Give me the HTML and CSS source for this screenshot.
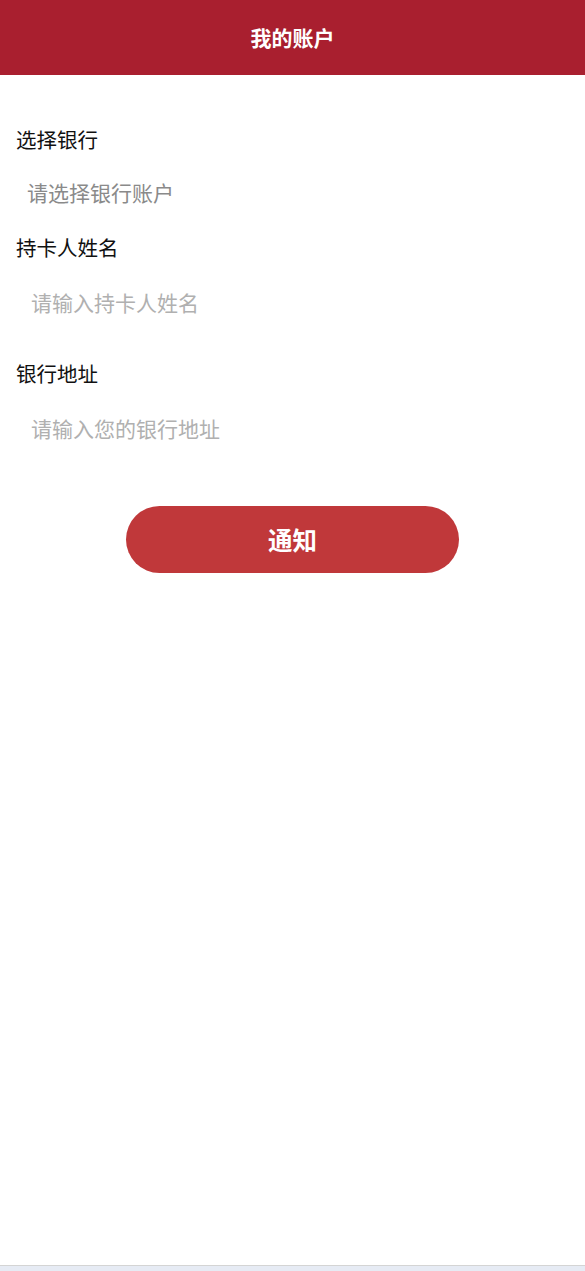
FILE: index.html
```html
<!DOCTYPE html>
<html lang="zh-CN">
<head>
<meta charset="utf-8">
<title>我的账户</title>
<link rel="stylesheet" href="styles.css">
</head>
<body>
<div class="page">
  <header class="topbar">
    <h1 class="title">我的账户</h1>
  </header>
  <main class="form">
    <div class="group group-first">
      <label class="label">选择银行</label>
      <div class="select">请选择银行账户</div>
    </div>
    <div class="group group-second">
      <label class="label" for="holder">持卡人姓名</label>
      <input class="input" id="holder" type="text" placeholder="请输入持卡人姓名">
    </div>
    <div class="group group-third">
      <label class="label" for="addr">银行地址</label>
      <input class="input" id="addr" type="text" placeholder="请输入您的银行地址">
    </div>
    <div class="actions">
      <button class="btn" type="button">通知</button>
    </div>
  </main>
  <footer class="bottom"></footer>
</div>
</body>
</html>
```

FILE: styles.css
```css
* { box-sizing: border-box; }
html, body {
  margin: 0;
  padding: 0;
  background: #ffffff;
  font-family: "Noto Sans CJK SC", "Noto Sans", sans-serif;
}
.page {
  min-height: 100vh;
  display: flex;
  flex-direction: column;
}
.topbar {
  height: 75px;
  background: #a91f2f;
  display: flex;
  align-items: center;
  justify-content: center;
}
.title {
  margin: 0;
  color: #ffffff;
  font-size: 21px;
  font-weight: 700;
  line-height: 1;
}
.form {
  padding: 0 16px;
}
.group {
  display: flex;
  flex-direction: column;
}
.group-first { margin-top: 49px; }
.group-second { margin-top: 15px; }
.group-third { margin-top: 31px; }
.label {
  display: block;
  font-size: 20.5px;
  line-height: 30px;
  height: 30px;
  color: #111111;
}
.select {
  margin-top: 13px;
  height: 50px;
  line-height: 50px;
  padding-left: 11px;
  font-size: 21px;
  color: #8a8a8a;
}
.input {
  margin-top: 15px;
  height: 50px;
  border: none;
  outline: none;
  padding: 0 0 0 15px;
  font-family: inherit;
  font-size: 21px;
  color: #333333;
  background: transparent;
  width: 100%;
}
.input::placeholder {
  color: #b0b0b0;
}
.actions {
  margin-top: 53px;
  display: flex;
  justify-content: center;
}
.btn {
  width: 333px;
  height: 67px;
  border: none;
  border-radius: 34px;
  background: #c0383a;
  color: #ffffff;
  font-family: inherit;
  font-size: 24.5px;
  font-weight: 700;
  cursor: pointer;
}
.bottom {
  margin-top: auto;
  height: 6px;
  border-top: 1px solid #d4d4d4;
  background: #e6ebf4;
}
```
